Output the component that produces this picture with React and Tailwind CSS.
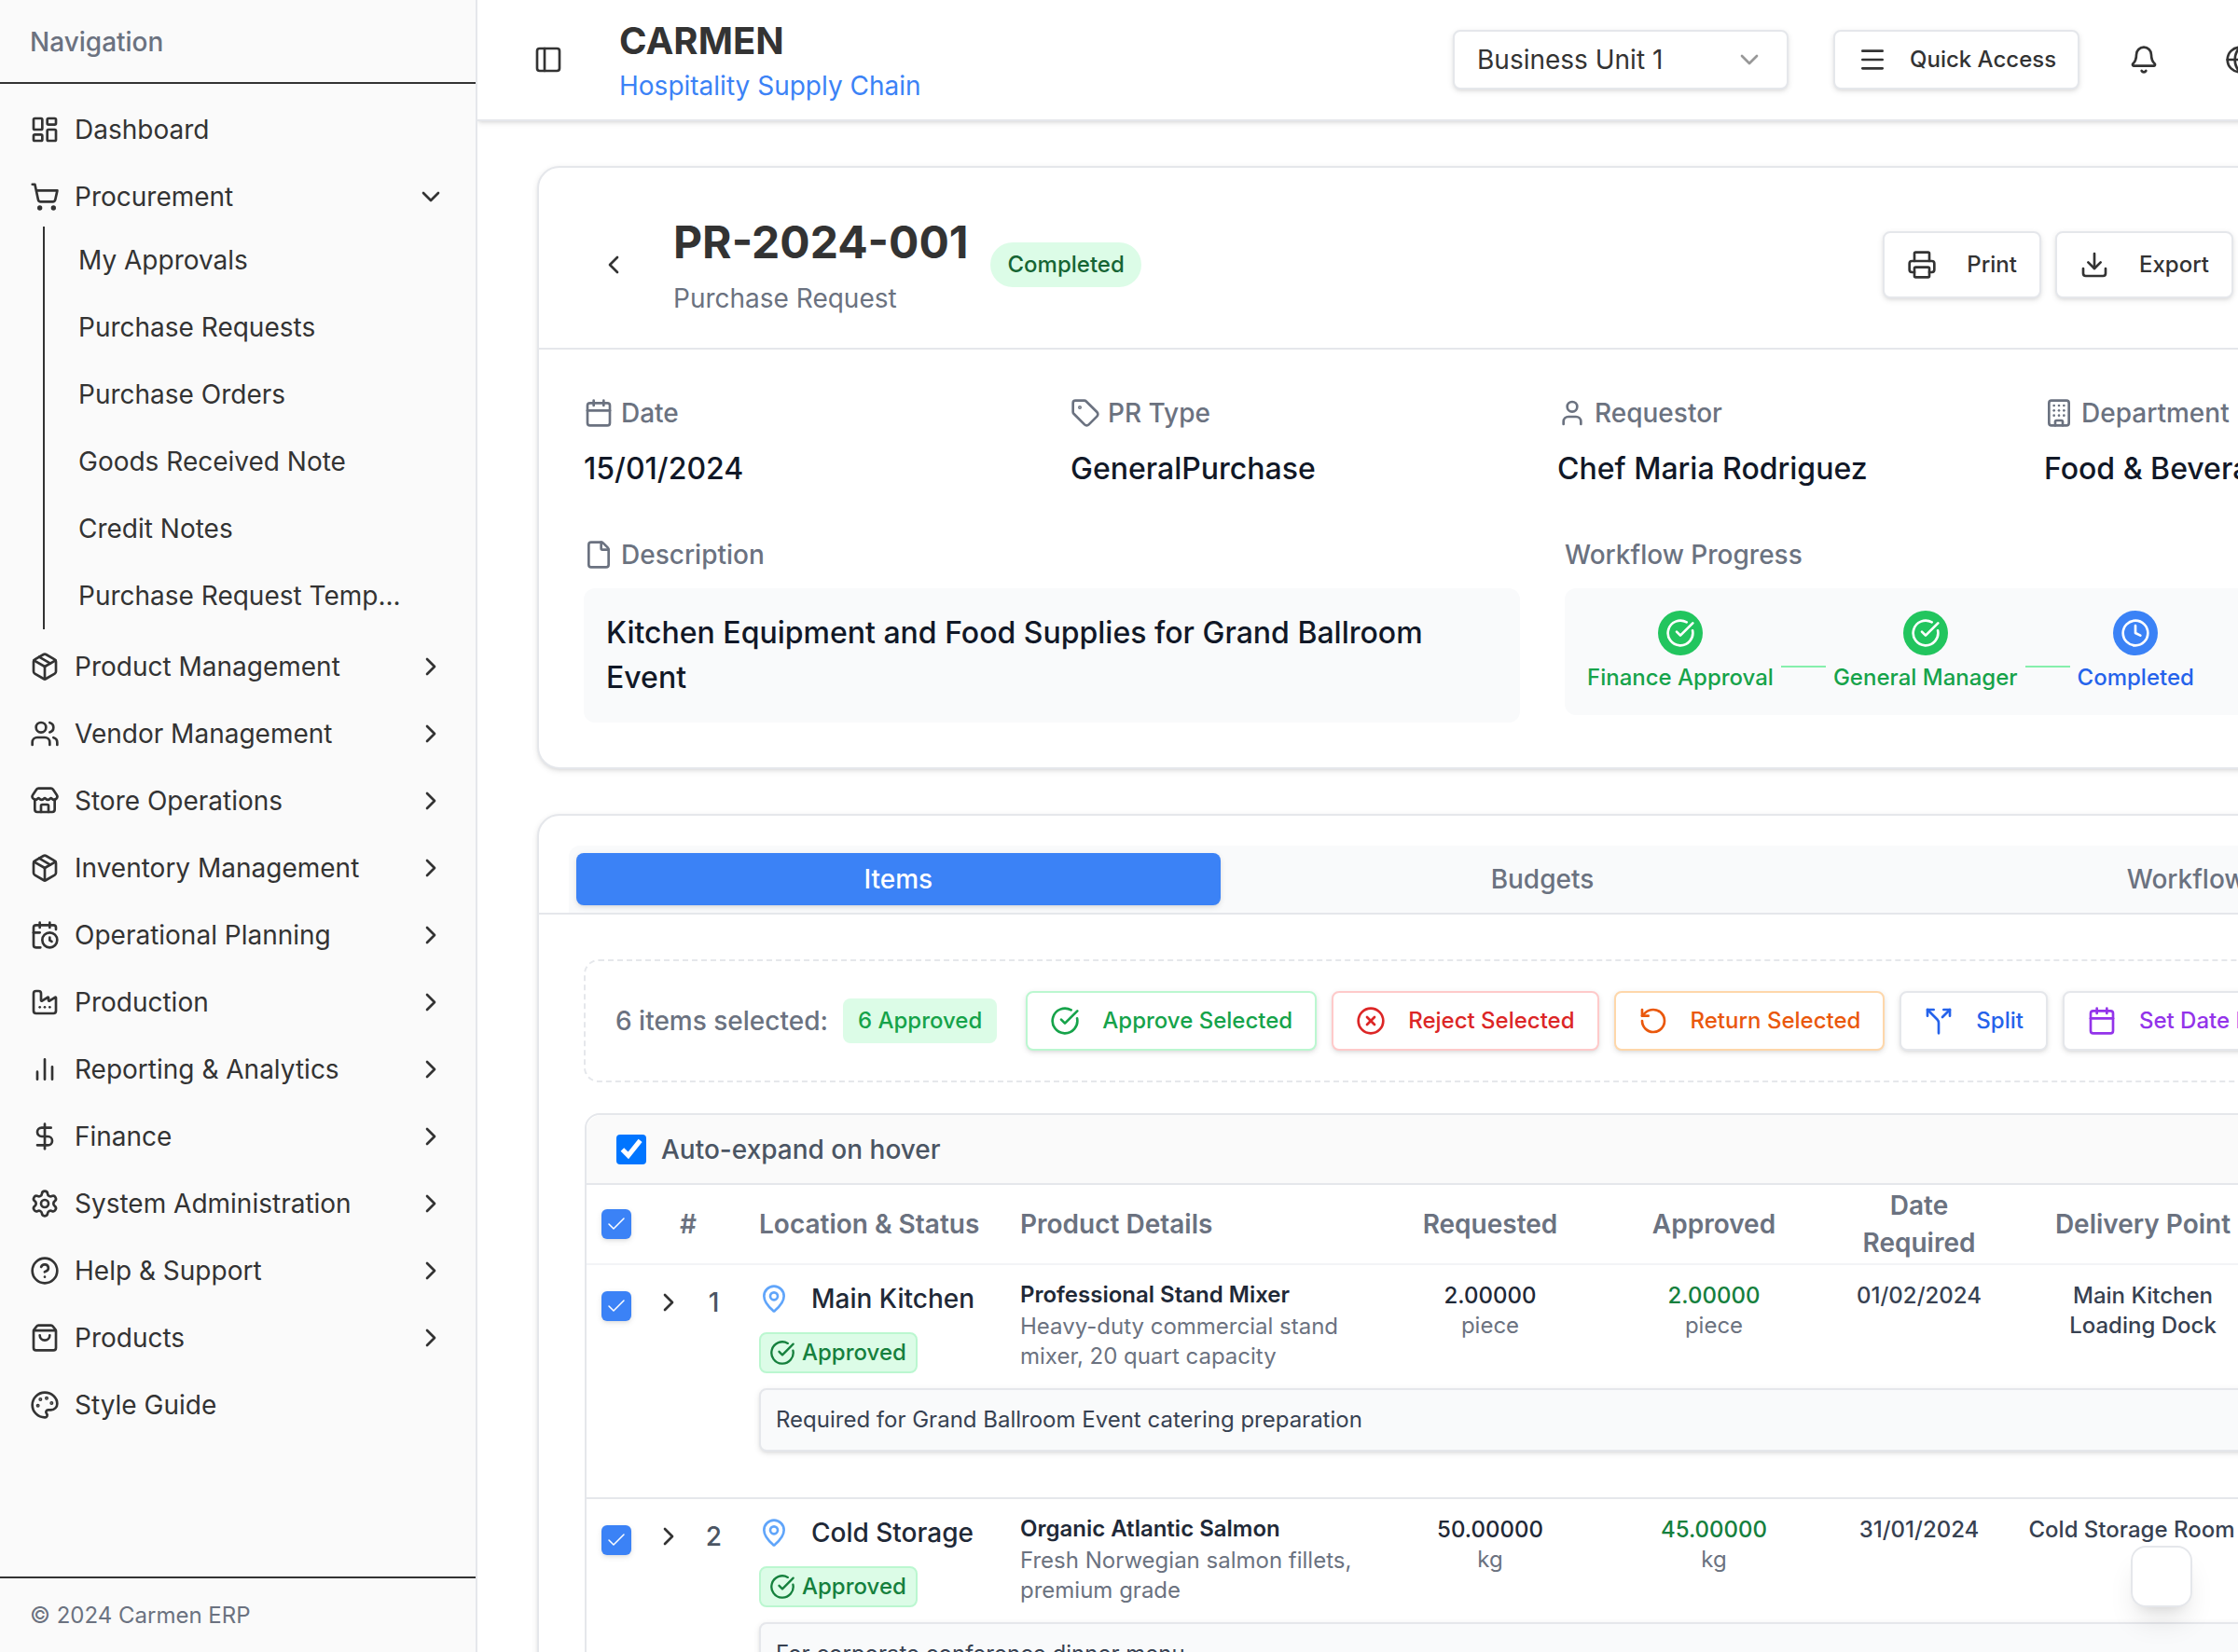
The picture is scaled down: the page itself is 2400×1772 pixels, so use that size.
import {
  Bell, Building, Calendar, CalendarClock, Check, ChevronDown, ChevronLeft, ChevronRight,
  CircleCheckBig, CircleHelp, CircleX, Clock, DollarSign, Download, Factory, File, Globe, LayoutDashboard,
  MapPin, Menu, Package, Palette, PanelLeft, Printer, RotateCcw, Settings, ShoppingBag, ShoppingCart, Split,
  Store, Tag, User, Users,
} from "lucide-react";

const BarsIcon = ({ size = 16, className }) => (
  <svg width={size} height={size} viewBox="0 0 24 24" fill="none" stroke="currentColor" strokeWidth="2" strokeLinecap="round" className={className}>
    <path d="M18 20V10M12 20V4M6 20v-6" />
  </svg>
);

const subItems = ["My Approvals", "Purchase Requests", "Purchase Orders", "Goods Received Note", "Credit Notes", "Purchase Request Temp..."];

const navItems = [
  { label: "Product Management", icon: Package },
  { label: "Vendor Management", icon: Users },
  { label: "Store Operations", icon: Store },
  { label: "Inventory Management", icon: Package },
  { label: "Operational Planning", icon: CalendarClock },
  { label: "Production", icon: Factory },
  { label: "Reporting & Analytics", icon: BarsIcon },
  { label: "Finance", icon: DollarSign },
  { label: "System Administration", icon: Settings },
  { label: "Help & Support", icon: CircleHelp },
  { label: "Products", icon: ShoppingBag },
];

const infoFields = [
  { label: "Date", value: "15/01/2024", icon: Calendar },
  { label: "PR Type", value: "GeneralPurchase", icon: Tag },
  { label: "Requestor", value: "Chef Maria Rodriguez", icon: User },
  { label: "Department", value: "Food & Beverage", icon: Building },
];

const bulkActions = [
  { label: "Approve Selected", icon: CircleCheckBig, className: "border-[#bbf7d0] text-[#16a34a]" },
  { label: "Reject Selected", icon: CircleX, className: "border-[#fecaca] text-[#dc2626]" },
  { label: "Return Selected", icon: RotateCcw, className: "border-[#fed7aa] text-[#ea580c]" },
  { label: "Split", icon: Split, className: "border-[#e5e7eb] text-[#2563eb]" },
  { label: "Set Date Required", icon: Calendar, className: "border-[#e5e7eb] text-[#9333ea]" },
];

const items = [
  {
    id: 1,
    location: "Main Kitchen",
    product: "Professional Stand Mixer",
    description: "Heavy-duty commercial stand mixer, 20 quart capacity",
    requested: "2.00000",
    approved: "2.00000",
    unit: "piece",
    date: "01/02/2024",
    delivery: ["Main Kitchen", "Loading Dock"],
    note: "Required for Grand Ballroom Event catering preparation",
  },
  {
    id: 2,
    location: "Cold Storage",
    product: "Organic Atlantic Salmon",
    description: "Fresh Norwegian salmon fillets, premium grade",
    requested: "50.00000",
    approved: "45.00000",
    unit: "kg",
    date: "31/01/2024",
    delivery: ["Cold Storage Room"],
    note: "For corporate conference dinner menu",
  },
];

const gridCols = "grid grid-cols-[32px_52.5px_140px_200px_120px_120px_100px_140px_1fr]";

const NavRow = ({ icon: Icon, label, children }) => (
  <div className="flex h-9 items-center gap-2 px-2 text-sm text-[#333]">
    <Icon size={16} className="shrink-0" />
    <span className="flex-1">{label}</span>
    {children}
  </div>
);

const Sidebar = () => (
  <aside className="flex w-64 shrink-0 flex-col border-r border-[#e5e7eb] bg-[#fafafa]">
    <div className="flex h-[45px] items-center border-b border-[#333] px-4 pt-px text-sm font-medium text-[#6b7280]">Navigation</div>
    <nav className="flex-1 px-2 pt-[6.5px]">
      <NavRow icon={LayoutDashboard} label="Dashboard" />
      <NavRow icon={ShoppingCart} label="Procurement">
        <ChevronDown size={16} />
      </NavRow>
      <div className="mb-0.5 ml-[15px] -mt-0.5 border-l border-[#333] pl-[18px]">
        {subItems.map((item) => (
          <div key={item} className="flex h-9 items-center text-sm whitespace-nowrap text-[#333]">
            {item}
          </div>
        ))}
      </div>
      {navItems.map((item) => (
        <NavRow key={item.label} icon={item.icon} label={item.label}>
          <ChevronRight size={16} />
        </NavRow>
      ))}
      <NavRow icon={Palette} label="Style Guide" />
    </nav>
    <div className="flex h-[40.5px] items-center border-t border-[#333] px-4 text-xs text-[#6b7280]">© 2024 Carmen ERP</div>
  </aside>
);

const HeaderBar = () => (
  <header className="flex h-[65px] items-center border-b border-[#e5e7eb] bg-white px-6 shadow-sm">
    <div className="flex w-[499px] items-center gap-6">
      <button className="flex h-7 w-7 items-center justify-center text-[#333]">
        <PanelLeft size={16} />
      </button>
      <div>
        <div className="text-xl leading-7 font-bold text-[#333]">CARMEN</div>
        <div className="text-sm leading-5 text-[#3b82f6]">Hospitality Supply Chain</div>
      </div>
    </div>
    <div className="flex h-8 w-[180px] items-center justify-between rounded border border-[#e5e7eb] bg-white px-3 text-sm text-[#333] shadow-sm">
      <span>Business Unit 1</span>
      <ChevronDown size={16} className="opacity-50" />
    </div>
    <button className="ml-6 flex h-8 w-[132px] shrink-0 items-center gap-3 rounded border border-[#e5e7eb] bg-white px-3 text-xs font-medium whitespace-nowrap text-[#333] shadow-sm">
      <Menu size={16} className="shrink-0" />
      Quick Access
    </button>
    <button className="ml-[20.5px] flex h-7 w-7 items-center justify-center text-[#333]">
      <Bell size={16} />
    </button>
    <button className="ml-[23.5px] flex h-7 w-7 items-center justify-center text-[#333]">
      <Globe size={16} />
    </button>
  </header>
);

const OutlineButton = ({ icon: Icon, children }) => (
  <button className="flex h-9 items-center gap-4 rounded border border-[#e5e7eb] bg-white px-3 text-xs font-medium text-[#333] shadow-sm">
    <Icon size={16} />
    {children}
  </button>
);

const Step = ({ label, done }) => (
  <div className="flex flex-col items-center">
    <div className={`flex h-6 w-6 items-center justify-center rounded-full text-white ${done ? "bg-[#22c55e]" : "bg-[#3b82f6]"}`}>
      {done ? <CircleCheckBig size={16} /> : <Clock size={16} />}
    </div>
    <div className={`mt-1 text-xs font-medium ${done ? "text-[#16a34a]" : "text-[#2563eb]"}`}>{label}</div>
  </div>
);

const SummaryCard = () => (
  <section className="rounded-xl border border-[#e5e7eb] bg-white shadow-sm">
    <div className="flex items-center justify-between border-b border-[#e5e7eb] pt-6 pr-[167.5px] pb-[16.5px] pl-6">
      <div className="flex items-center gap-4">
        <button className="flex h-8 w-8 items-center justify-center text-[#333]">
          <ChevronLeft size={16} />
        </button>
        <div className="flex items-center gap-3">
          <div>
            <h1 className="text-2xl font-bold text-[#333]">PR-2024-001</h1>
            <p className="mt-1 text-sm text-[#6b7280]">Purchase Request</p>
          </div>
          <span className="flex h-6 items-center rounded-full bg-[#dcfce7] px-[9px] text-xs font-medium text-[#166534]">Completed</span>
        </div>
      </div>
      <div className="flex gap-[7.5px]">
        <OutlineButton icon={Printer}>Print</OutlineButton>
        <OutlineButton icon={Download}>Export</OutlineButton>
      </div>
    </div>
    <div className="p-6">
      <div className="grid grid-cols-4 gap-4">
        {infoFields.map(({ label, value, icon: Icon }) => (
          <div key={label}>
            <div className="flex items-center gap-1 text-sm font-medium text-[#6b7280]">
              <Icon size={16} />
              {label}
            </div>
            <div className="mt-2 text-base font-medium whitespace-nowrap text-[#111827]">{value}</div>
          </div>
        ))}
      </div>
      <div className="mt-6 grid grid-cols-2 items-start gap-6">
        <div>
          <div className="flex items-center gap-1 text-sm font-medium text-[#6b7280]">
            <File size={16} />
            Description
          </div>
          <div className="mt-2 rounded-md bg-[#f9fafb] p-3 text-base font-medium text-[#111827]">
            Kitchen Equipment and Food Supplies for Grand Ballroom Event
          </div>
        </div>
        <div>
          <div className="text-sm font-medium text-[#6b7280]">Workflow Progress</div>
          <div className="mt-2 flex items-center rounded-md bg-[#f9fafb] p-3">
            <Step label="Finance Approval" done />
            <div className="mx-1 mt-4 h-px w-6 bg-[#86efac]" />
            <Step label="General Manager" done />
            <div className="mx-1 mt-4 h-px w-6 bg-[#86efac]" />
            <Step label="Completed" />
          </div>
        </div>
      </div>
    </div>
  </section>
);

const BlueCheck = () => (
  <span className="flex h-4 w-4 items-center justify-center rounded-[3px] bg-[#3b82f6] text-white shadow">
    <Check size={12} strokeWidth={1.5} />
  </span>
);

const ItemRow = ({ item }) => (
  <div className={`${gridCols} gap-y-2 border-b border-[#e5e7eb] pt-2 pb-[24.5px] text-xs`}>
    <div className="pt-1.5 pl-2">
      <BlueCheck />
    </div>
    <div className="flex h-6 items-center pl-1">
      <ChevronRight size={16} className="shrink-0 text-[#333]" />
      <span className="flex-1 text-center text-sm font-medium text-[#4b5563]">{item.id}</span>
    </div>
    <div className="px-2">
      <div className="flex h-5 items-center gap-3 text-sm font-medium text-[#1f2937]">
        <MapPin size={16} className="text-[#60a5fa]" />
        {item.location}
      </div>
      <span className="mt-2 flex h-[22px] w-[85px] items-center gap-[3.5px] rounded border border-[#bbf7d0] bg-[#dcfce7] pl-[4.5px] font-medium text-[#15803d]">
        <CircleCheckBig size={14} />
        Approved
      </span>
    </div>
    <div className="px-2">
      <div className="font-semibold text-[#1f2937]">{item.product}</div>
      <div className="mt-px text-[#6b7280]">{item.description}</div>
    </div>
    <div className="mt-[0.5px] px-2 text-center">
      <div className="font-medium text-[#1f2937]">{item.requested}</div>
      <div className="text-[#6b7280]">{item.unit}</div>
    </div>
    <div className="mt-[0.5px] px-2 text-center">
      <div className="font-medium text-[#15803d]">{item.approved}</div>
      <div className="text-[#6b7280]">{item.unit}</div>
    </div>
    <div className="mt-[0.5px] px-2 text-center font-medium text-[#374151]">{item.date}</div>
    <div className={`mt-[0.5px] pl-2 text-center font-medium whitespace-nowrap text-[#374151] ${item.id === 2 ? "pr-5" : "pr-2"}`}>
      {item.delivery.map((line) => (
        <div key={line}>{line}</div>
      ))}
    </div>
    <div className="col-start-3 col-end-10 pl-2">
      <div className="rounded border border-[#e5e7eb] bg-[#f9fafb] p-2 text-[#374151] shadow-sm">{item.note}</div>
    </div>
  </div>
);

const ItemsCard = () => (
  <section className="rounded-xl border border-[#e5e7eb] bg-white shadow-sm">
    <div className="border-b border-[#e5e7eb] px-4 pt-4">
      <div className="grid h-9 grid-cols-3 rounded-t-md bg-[#f9fafb] p-1 text-sm font-medium text-[#6b7280]">
        <div className="flex items-center justify-center rounded bg-[#3b82f6] text-white shadow-sm">Items</div>
        <div className="flex items-center justify-center">Budgets</div>
        <div className="flex items-center justify-center">Workflow</div>
      </div>
    </div>
    <div className="p-6">
      <div className="flex items-center rounded-lg border border-dashed border-[#e5e7eb] p-4">
        <span className="text-sm font-medium text-[#6b7280]">6 items selected:</span>
        <span className="ml-2 flex h-6 items-center rounded bg-[#dcfce7] px-2 text-xs font-medium text-[#16a34a]">6 Approved</span>
        <div className="ml-[15.5px] flex gap-2">
          {bulkActions.map(({ label, icon: Icon, className }) => (
            <button
              key={label}
              className={`flex h-8 items-center gap-3 rounded border bg-white px-3 text-xs font-medium whitespace-nowrap shadow-sm ${className}`}
            >
              <Icon size={16} />
              {label}
            </button>
          ))}
        </div>
      </div>
      <div className="mt-[16.5px] ml-[0.5px] rounded-lg border border-[#e5e7eb] bg-white">
        <div className="flex h-[37.5px] items-center gap-2 rounded-t-lg border-b border-[#e5e7eb] bg-[#fafafa] px-4 text-sm font-medium text-[#4b5563]">
          <input type="checkbox" defaultChecked className="h-4 w-4" />
          Auto-expand on hover
        </div>
        <div className={`${gridCols} h-[43px] items-center border-b border-[#f3f4f6] text-sm font-semibold text-[#6b7280]`}>
          <div className="pl-2">
            <BlueCheck />
          </div>
          <div className="pl-[18px]">#</div>
          <div className="px-2">Location &amp; Status</div>
          <div className="px-2">Product Details</div>
          <div className="px-2 text-center">Requested</div>
          <div className="px-2 text-center">Approved</div>
          <div className="px-2 text-center">Date Required</div>
          <div className="px-2 text-center">Delivery Point</div>
        </div>
        {items.map((item) => (
          <ItemRow key={item.id} item={item} />
        ))}
      </div>
    </div>
  </section>
);

const App = () => (
  <div className="relative flex h-[886px] w-[1200px] overflow-hidden bg-white font-['Inter',sans-serif] [zoom:2]">
    <Sidebar />
    <main className="min-w-0 flex-1 overflow-hidden">
      <div className="w-[1142px]">
        <HeaderBar />
        <div className="space-y-6 px-8 pt-6">
          <SummaryCard />
          <ItemsCard />
        </div>
      </div>
    </main>
    <button className="absolute right-[24.5px] bottom-6 h-[33px] w-[33px] rounded-lg border border-[#e5e7eb] bg-white shadow-lg" />
  </div>
);

export default App;
